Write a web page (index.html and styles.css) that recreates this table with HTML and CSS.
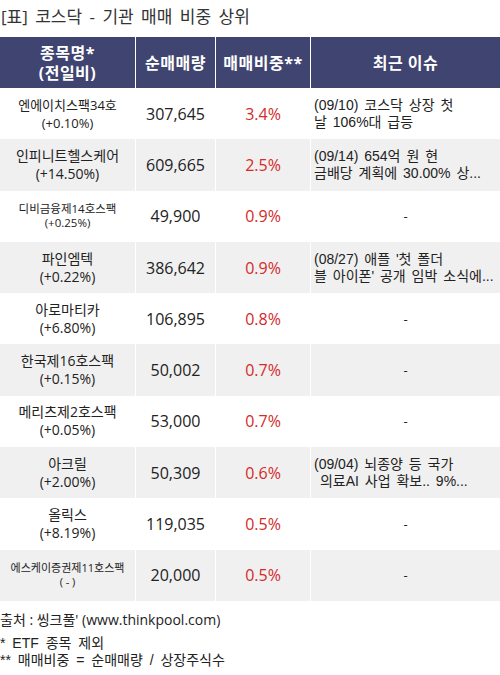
FILE: index.html
```html
<!DOCTYPE html>
<html lang="ko">
<head>
  <meta charset="UTF-8">
  <title>코스닥 - 기관 매매 비중 상위</title>
  <meta name="viewport" content="width=device-width, initial-scale=1.0">
  <link rel="stylesheet" href="styles.css">
</head>
<body>
  <!-- 제목 -->
  <h1 class="title">[표] 코스닥 - 기관 매매 비중 상위</h1>

  <!-- 표 -->
  <div class="grid">
    <div class="th">종목명*<br>(전일비)</div>
    <div class="th">순매매량</div>
    <div class="th">매매비중**</div>
    <div class="th">최근 이슈</div>

    <div class="td name sm"><div>엔에이치스팩34호<br>(+0.10%)</div></div>
    <div class="td num">307,645</div>
    <div class="td pct">3.4%</div>
    <div class="td issue"><div>(09/10) 코스닥 상장 첫<br>날 106%대 급등</div></div>

    <div class="td name alt"><div>인피니트헬스케어<br>(+14.50%)</div></div>
    <div class="td num alt">609,665</div>
    <div class="td pct alt">2.5%</div>
    <div class="td issue alt"><div>(09/14) 654억 원 현<br>금배당 계획에 30.00% 상...</div></div>

    <div class="td name xs"><div>디비금융제14호스팩<br>(+0.25%)</div></div>
    <div class="td num">49,900</div>
    <div class="td pct">0.9%</div>
    <div class="td none">-</div>

    <div class="td name alt"><div>파인엠텍<br>(+0.22%)</div></div>
    <div class="td num alt">386,642</div>
    <div class="td pct alt">0.9%</div>
    <div class="td issue alt"><div>(08/27) 애플 '첫 폴더<br>블 아이폰' 공개 임박 소식에...</div></div>

    <div class="td name"><div>아로마티카<br>(+6.80%)</div></div>
    <div class="td num">106,895</div>
    <div class="td pct">0.8%</div>
    <div class="td none">-</div>

    <div class="td name alt"><div>한국제16호스팩<br>(+0.15%)</div></div>
    <div class="td num alt">50,002</div>
    <div class="td pct alt">0.7%</div>
    <div class="td none alt">-</div>

    <div class="td name"><div>메리츠제2호스팩<br>(+0.05%)</div></div>
    <div class="td num">53,000</div>
    <div class="td pct">0.7%</div>
    <div class="td none">-</div>

    <div class="td name alt"><div>아크릴<br>(+2.00%)</div></div>
    <div class="td num alt">50,309</div>
    <div class="td pct alt">0.6%</div>
    <div class="td issue alt"><div>(09/04) 뇌종양 등 국가<br>&nbsp;의료AI 사업 확보.. 9%...</div></div>

    <div class="td name"><div>올릭스<br>(+8.19%)</div></div>
    <div class="td num">119,035</div>
    <div class="td pct">0.5%</div>
    <div class="td none">-</div>

    <div class="td name xxs alt"><div>에스케이증권제11호스팩<br>( - )</div></div>
    <div class="td num alt">20,000</div>
    <div class="td pct alt">0.5%</div>
    <div class="td none alt">-</div>
  </div>

  <!-- 출처 / 주석 -->
  <p class="source">출처 : 씽크풀' (www.thinkpool.com)</p>
  <p class="note">* ETF 종목 제외<br>** 매매비중 = 순매매량 / 상장주식수</p>
</body>
</html>
```

FILE: styles.css
```css
body {
  font-family: "Open Sans", "Noto Sans CJK KR", sans-serif;
  background: #fff;
  color: #222;
  margin: 0;
}
.title {
  font-size: 17px;
  font-weight: normal;
  color: #333;
  margin: 0;
  padding: 7px 0 0 1px;
  height: 37px;
  box-sizing: border-box;
  line-height: 20px;
  word-spacing: 3px;
}
.grid {
  display: grid;
  grid-template-columns: 135px 79px 94px 189px;
  grid-template-rows: 51px repeat(10, 51.3px);
  column-gap: 1px;
  width: 500px;
}
.th {
  background: #3f4470;
  color: #fff;
  font-weight: bold;
  font-size: 16px;
  line-height: 20px;
  letter-spacing: 0.5px;
  display: flex;
  align-items: center;
  justify-content: center;
  text-align: center;
}
.td {
  display: flex;
  align-items: center;
  justify-content: center;
  text-align: center;
  background: #fff;
}
.td.alt {
  background: #f0f0f0;
}
.name {
  font-size: 14px;
  line-height: 18px;
}
.name.sm {
  font-size: 13px;
}
.name.xs {
  font-size: 11.5px;
  line-height: 14px;
}
.name.xxs {
  font-size: 11px;
  line-height: 14px;
}
.num {
  font-size: 16px;
}
.pct {
  font-size: 16px;
  color: #d42a2a;
}
.issue {
  justify-content: flex-start;
  text-align: left;
  font-family: "Liberation Sans", "Noto Sans CJK KR", sans-serif;
  font-size: 14px;
  line-height: 16.5px;
  padding-left: 3px;
  word-spacing: 2px;
}
.none {
  font-size: 13px;
}
.source {
  font-size: 14px;
  margin: 9px 0 0 0;
  line-height: 20px;
}
.note {
  font-family: "Liberation Sans", "Noto Sans CJK KR", sans-serif;
  font-size: 14px;
  margin: 5px 0 0 0;
  line-height: 17px;
  word-spacing: 3px;
}
```
